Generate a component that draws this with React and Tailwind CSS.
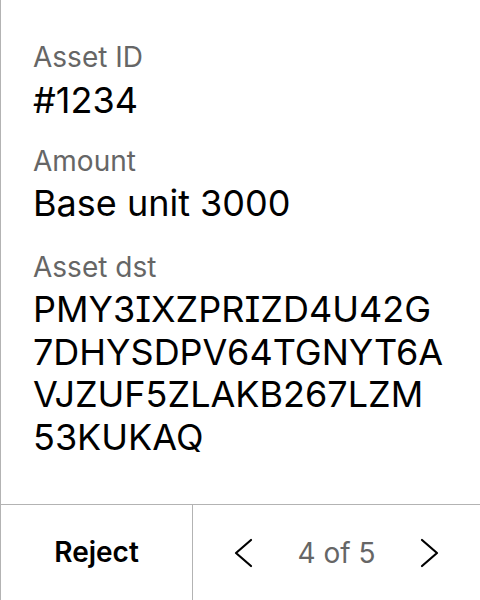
import React from 'react';

const dst = 'PMY3IXZPRIZD4U42G7DHYSDPV64TGNYT6AVJZUF5ZLAKB267LZM53KUKAQ';
const dstLines = dst.match(/.{1,17}/g);

function Chevron({ dir }) {
  const pts = dir === 'left' ? '17,2 2,15 17,28' : '2,2 17,15 2,28';
  return (
    <svg width="19" height="30" viewBox="0 0 19 30" fill="none" stroke="black" strokeWidth="2.2" strokeLinecap="round" strokeLinejoin="round">
      <polyline points={pts} />
    </svg>
  );
}

export default function App() {
  return (
    <div className="flex h-[600px] w-[480px] flex-col border-l border-[#b3b3b3] bg-white font-['Inter',sans-serif] text-black">
      <div className="flex-1 pl-[32px] pr-[16px] pt-[40px]">
        <div>
          <p className="text-[28px] leading-[34px] text-[#666666]">Asset ID</p>
          <p className="mt-[4px] text-[36px] leading-[44px]">#1234</p>
        </div>
        <div className="mt-[22px]">
          <p className="text-[28px] leading-[34px] text-[#666666]">Amount</p>
          <p className="mt-[3px] text-[36px] leading-[44px]">Base unit 3000</p>
        </div>
        <div className="mt-[25px]">
          <p className="text-[28px] leading-[34px] text-[#666666]">Asset dst</p>
          <p className="mt-[4px] text-[36px] leading-[42.7px] [font-feature-settings:'cv08']">
            {dstLines.map((l) => (
              <span key={l} className="block">{l}</span>
            ))}
          </p>
        </div>
      </div>
      <div className="grid h-[96px] grid-cols-[191px_1fr] border-t border-[#b3b3b3]">
        <button className="flex items-center justify-center pb-[2px] text-[28px] font-semibold">Reject</button>
        <div className="flex items-center justify-between border-l border-[#b3b3b3] pl-[41px] pr-[41px]">
          <Chevron dir="left" />
          <span className="text-[28px] text-[#666666]">4 of 5</span>
          <Chevron dir="right" />
        </div>
      </div>
    </div>
  );
}
